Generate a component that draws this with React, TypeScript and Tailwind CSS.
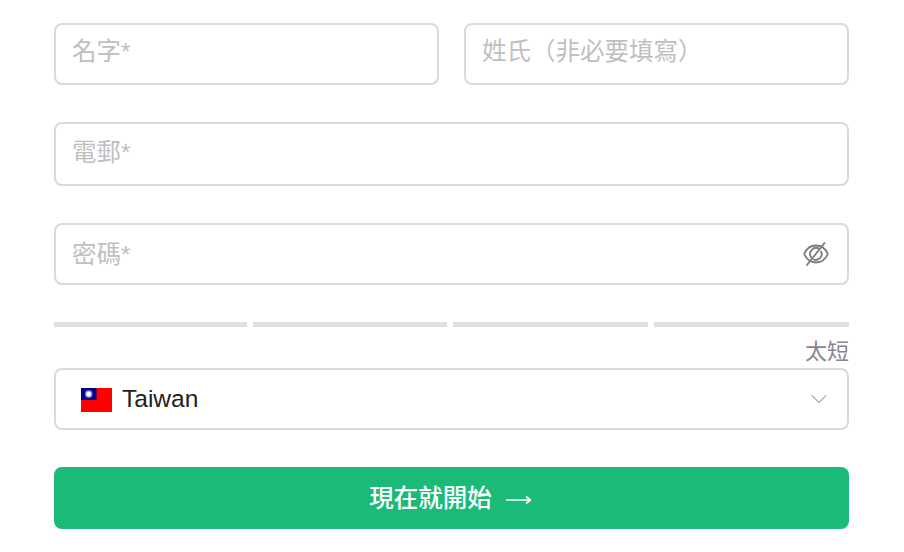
import { ChevronDown } from 'lucide-react';

const fieldClass =
  'h-full w-full rounded-lg border-2 border-[#dadada] bg-white px-[16px] text-[24.5px] text-[#333] outline-none placeholder:text-[#bfbfbf]';

function TaiwanFlag() {
  return (
    <svg width="31" height="24" viewBox="0 0 32 24" preserveAspectRatio="none" className="mt-[2px] shrink-0">
      <rect width="32" height="24" fill="#fe0000" />
      <rect width="16" height="12" fill="#000095" />
      <circle cx="8" cy="6" r="4" fill="#fff" opacity="0.45" />
      <circle cx="8" cy="6" r="2.600" fill="#fff" />
    </svg>
  );
}

function EyeOff() {
  return (
    <svg width="26" height="24" viewBox="0 0 26 24" fill="none" stroke="#7b7b83" strokeWidth="1.8" strokeLinecap="round">
      <path d="M1.200 12C3.500 6.500 8 3.500 13 3.500S22.500 6.500 24.800 12C22.500 17.500 18 20.500 13 20.500S3.500 17.500 1.200 12z" />
      <path d="M8.300 15.500A6 6 0 0 1 16.500 7M18.200 9.500A6 6 0 0 1 10.800 17.600" />
      <path d="M21.500 1 4 23" />
    </svg>
  );
}

export default function App() {
  return (
    <div
      className="h-[552px] w-[904px] overflow-hidden bg-white pl-[54px] pr-[55px] pt-[23px]"
      style={{ fontFamily: '"Liberation Sans", "Noto Sans CJK TC", sans-serif' }}
    >
      <div className="flex h-[62px] gap-[25px]">
        <div className="flex-1">
          <input className={`${fieldClass} pb-[4px]`} placeholder="名字*" />
        </div>
        <div className="flex-1">
          <input className={`${fieldClass} pb-[4px]`} placeholder="姓氏（非必要填寫）" />
        </div>
      </div>

      <div className="mt-[37px] h-[64px]">
        <input className={`${fieldClass} pb-[2px]`} placeholder="電郵*" />
      </div>

      <div className="relative mt-[37px] h-[62px]">
        <input className={`${fieldClass} pt-[1px]`} placeholder="密碼*" />
        <div className="absolute right-[20px] top-[19px]">
          <EyeOff />
        </div>
      </div>

      <div className="mt-[37px] flex h-[5px] gap-[6px]">
        <div className="w-[193px] bg-[#e0e0e0]" />
        <div className="w-[194px] bg-[#e0e0e0]" />
        <div className="w-[195px] bg-[#e0e0e0]" />
        <div className="w-[195px] bg-[#e0e0e0]" />
      </div>

      <p className="mt-[9px] h-[32px] text-right text-[22px] leading-[32px] text-[#85858f]">太短</p>

      <div className="flex h-[62px] items-center rounded-lg border-2 border-[#dadada] pl-[25px] pr-[14px]">
        <TaiwanFlag />
        <span className="ml-[10px] text-[24.5px] text-[#222]">Taiwan</span>
        <ChevronDown size={28} strokeWidth={0.9} className="ml-auto text-[#8f8f8f]" />
      </div>

      <button className="mt-[37px] flex h-[62px] w-full items-center justify-center gap-[14px] rounded-lg bg-[#1bba78] pr-[3px] pt-[2px] text-[24.5px] font-medium text-white">
        現在就開始
        <svg width="25" height="14" viewBox="0 0 25 14" fill="none" stroke="#fff" strokeWidth="1.700" className="mt-[1px]">
          <path d="M0 7H24M20 3.500 24.500 7 20 10.500" />
        </svg>
      </button>
    </div>
  );
}
